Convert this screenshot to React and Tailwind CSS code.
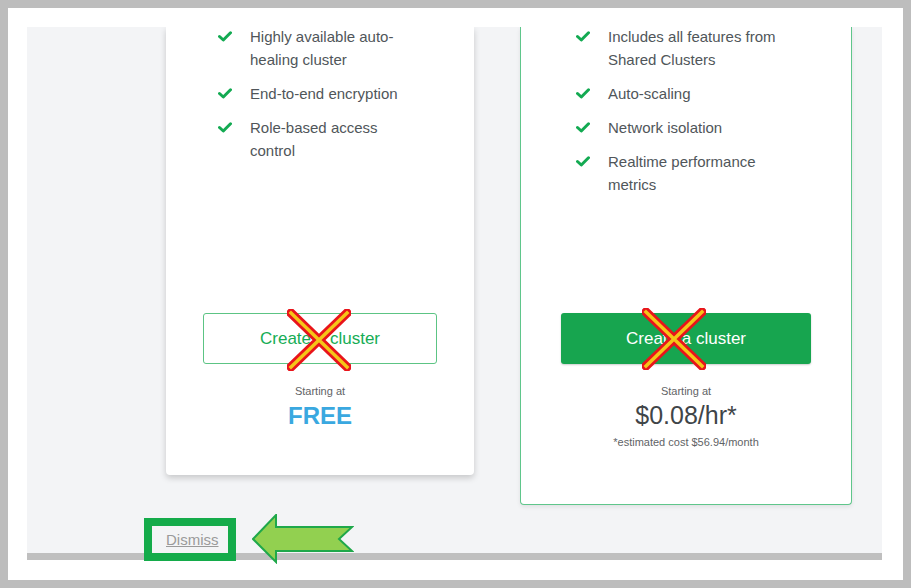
const SHARED = [
  'Highly available auto-healing cluster',
  'End-to-end encryption',
  'Role-based access control',
]

const DEDICATED = [
  'Includes all features from Shared Clusters',
  'Auto-scaling',
  'Network isolation',
  'Realtime performance metrics',
]

function Check() {
  return (
    <div className="h-[23px] w-[14px] shrink-0 flex items-center">
      <svg width="14" height="11" viewBox="0 0 14 11" fill="none">
        <path d="M1.5 5.5 L5.3 9 L12.5 1.8" stroke="#13aa52" strokeWidth="3" strokeLinecap="round" strokeLinejoin="round" />
      </svg>
    </div>
  )
}

function FeatureList({ items }) {
  return (
    <ul className="-mt-[2px] flex flex-col gap-[11px]">
      {items.map(t => (
        <li key={t} className="flex items-start gap-[18px]">
          <Check />
          <span className="w-[172px] text-[15px] leading-[23px] text-[#50565a]">{t}</span>
        </li>
      ))}
    </ul>
  )
}

function Cross({ className }) {
  return (
    <svg className={`absolute top-[-5px] pointer-events-none ${className}`} width="64" height="62" viewBox="0 0 64 62">
      <path d="M4 4 L60 58 M60 4 L4 58" stroke="#e8141b" strokeWidth="9" strokeLinecap="square" />
      <path d="M4 4 L60 58 M60 4 L4 58" stroke="#f5c518" strokeWidth="3.5" strokeLinecap="square" />
    </svg>
  )
}

export default function App() {
  return (
    <div className="h-[588px] bg-[#bdbdbd] p-2" style={{ fontFamily: '"Liberation Sans", Arial, sans-serif' }}>
      <div className="relative h-full bg-white pt-[19px] pl-[19px] pr-[21px]">
        <div className="h-[526px] bg-[#f3f4f6] overflow-hidden flex flex-col">
          <div className="flex items-start gap-[46px] pl-[139px]">
            {/* Shared cluster card */}
            <div className="w-[308px] bg-white rounded-b-[4px] shadow-[0_3px_6px_rgba(0,0,0,0.18)] flex flex-col items-center pb-[45px]">
              <div className="h-[286px] self-stretch pl-[52px]">
                <FeatureList items={SHARED} />
              </div>
              <button className="relative w-[234px] h-[51px] rounded-[3px] border border-[#5cc484] bg-white text-[17px] text-[#16ad55]">
                Create a cluster
                <Cross className="left-[83px]" />
              </button>
              <div className="mt-[20px] text-[11px] leading-[14px] text-[#5f6366]">Starting at</div>
              <div className="mt-[4px] text-[24px] leading-[28px] font-bold text-[#3aa8e0]">FREE</div>
            </div>

            {/* Dedicated cluster card */}
            <div className="w-[332px] bg-white rounded-b-[4px] border-x border-b border-[#5fc68b] shadow-[0_2px_4px_rgba(0,0,0,0.08)] flex flex-col items-center pb-[56px]">
              <div className="h-[286px] self-stretch pl-[55px]">
                <FeatureList items={DEDICATED} />
              </div>
              <button className="relative w-[250px] h-[51px] rounded-[3px] bg-[#17a54f] text-[17px] text-white shadow-[0_1px_2px_rgba(0,0,0,0.2)]">
                Create a cluster
                <Cross className="left-[81px]" />
              </button>
              <div className="mt-[20px] text-[11px] leading-[14px] text-[#5f6366]">Starting at</div>
              <div className="mt-[2px] text-[25px] leading-[30px] text-[#3f4548]">$0.08/hr*</div>
              <div className="mt-[6px] text-[11px] leading-[12px] text-[#5f6366]">*estimated cost $56.94/month</div>
            </div>
          </div>

          <div className="mt-auto pl-[139px] pb-[1px]">
            <a className="text-[15px] leading-5 text-[#9a9a9a] underline">Dismiss</a>
          </div>
        </div>
        <div className="h-[7px] bg-[#bfbfbf]" />

        {/* annotations */}
        <div className="absolute left-[136px] top-[510px] w-[92px] h-[43px] border-[8px] border-[#14ab4a]" />
        <svg className="absolute left-[244px] top-[506px]" width="102" height="50" viewBox="0 0 102 50">
          <path d="M1 25 L24 1 L24 13 L100 13 L87 25 L100 37 L24 37 L24 48 Z" fill="#92d050" stroke="#1fa84a" strokeWidth="2" strokeLinejoin="miter" />
        </svg>
      </div>
    </div>
  )
}
